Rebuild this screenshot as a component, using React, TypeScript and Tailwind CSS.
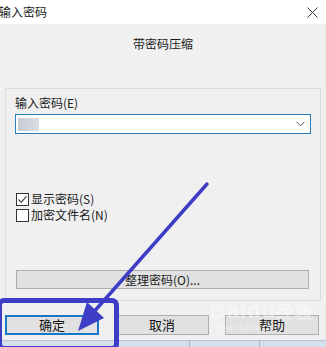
import React from "react";

function CheckBox({ checked }: { checked?: boolean }) {
  return (
    <div className="flex h-[13px] w-[13px] items-center justify-center border border-[#333333] bg-white">
      {checked && (
        <svg width="11" height="11" viewBox="0 0 11 11">
          <path d="M1.5 5.5 L4.2 8.2 L9.5 2.2" fill="none" stroke="#555555" strokeWidth="1.3" />
        </svg>
      )}
    </div>
  );
}

function Btn({ label, focused }: { label: string; focused?: boolean }) {
  return (
    <div
      className={
        focused
          ? "flex h-[20px] w-[94px] items-center justify-center border-2 border-[#1a78c8] bg-[#e1e1e1] text-[13px] text-[#111]"
          : "flex h-[20px] w-[94px] items-center justify-center border border-[#adadad] bg-[#e1e1e1] text-[13px] text-[#111]"
      }
    >
      {label}
    </div>
  );
}

export default function App() {
  return (
    <div
      className="relative h-[347px] w-[326px] overflow-hidden bg-[#f0f0f0] text-[#1a1a1a]"
      style={{ fontFamily: '"Noto Sans CJK SC", "Liberation Sans", sans-serif' }}
    >
      {/* Title bar */}
      <div className="flex h-[24px] items-center justify-between bg-white">
        <span className="-ml-[1px] text-[12px] leading-none text-[#222]">输入密码</span>
        <svg width="11" height="11" viewBox="0 0 11 11" className="mr-[8px]">
          <path d="M0.5 0.5 L10.5 10.5 M10.5 0.5 L0.5 10.5" stroke="#333" strokeWidth="1" />
        </svg>
      </div>

      {/* Heading */}
      <div className="pt-[12px] text-center text-[12px] leading-[16px]">带密码压缩</div>

      {/* Group panel */}
      <div className="mx-[5px] mt-[36px] flex h-[213px] flex-col border border-[#dcdcdc] px-[9px] pt-[6px]">
        <div className="text-[12px] leading-[16px]">输入密码(E)</div>
        <div className="mt-[3px] flex h-[20px] items-center justify-between border border-[#2c7fbd] bg-white pl-[2px] pr-[5px]">
          <div className="h-[13px] w-[21px] bg-gradient-to-r from-[#c6cad2] to-[#dcdfe4]" />
          <svg width="9" height="6" viewBox="0 0 9 6">
            <path d="M0.5 0.8 L4.5 4.8 L8.5 0.8" fill="none" stroke="#555" strokeWidth="1" />
          </svg>
        </div>

        <div className="mt-[57px] flex h-[16px] items-center gap-[2px] pl-[1px] text-[12px]">
          <CheckBox checked />
          <span>显示密码(S)</span>
        </div>
        <div className="flex h-[16px] items-center gap-[2px] pl-[1px] text-[12px]">
          <CheckBox />
          <span>加密文件名(N)</span>
        </div>

        <div className="mt-[47px] ml-[1px] mr-[2px] flex h-[19px] items-center justify-center border border-[#adadad] bg-[#e1e1e1] text-[12px]">
          整理密码(O)...
        </div>
      </div>

      {/* Bottom buttons */}
      <div className="mt-[14px] flex gap-[16px] pl-[5px]">
        <Btn label="确定" focused />
        <Btn label="取消" />
        <Btn label="帮助" />
      </div>

      {/* Window strip below the dialog */}
      <div className="mt-[5px] h-[1px] bg-[#b9c3cf]" />
      <div className="flex h-[8px] bg-[#d4e0ec]">
        <div className="w-[190px] border-r border-[#aab6c4]" />
        <div className="w-[70px] border-r border-[#aab6c4]" />
      </div>

      {/* Watermark */}
      <div className="pointer-events-none absolute left-[210px] top-[300px] flex flex-col leading-none text-white/45">
        <span className="text-[22px] font-bold tracking-[1px]" style={{ fontFamily: '"Liberation Sans", sans-serif' }}>
          Baidu<span className="text-[18px]">经验</span>
        </span>
        <span className="mt-[1px] text-[8px]">jingyan.baidu.com</span>
      </div>

      {/* Annotation box */}
      <div className="pointer-events-none absolute left-[-3px] top-[298px] h-[53px] w-[122px] rounded-[7px] border-[5px] border-[#3d3dc6]" />

      {/* Annotation arrow */}
      <svg className="pointer-events-none absolute left-0 top-0" width="326" height="347" viewBox="0 0 326 347">
        <line x1="207" y1="184" x2="92" y2="314" stroke="#3d3dc6" strokeWidth="3.5" strokeLinecap="round" />
        <polygon points="78,331 104,318 87,302" fill="#3d3dc6" />
      </svg>
    </div>
  );
}
